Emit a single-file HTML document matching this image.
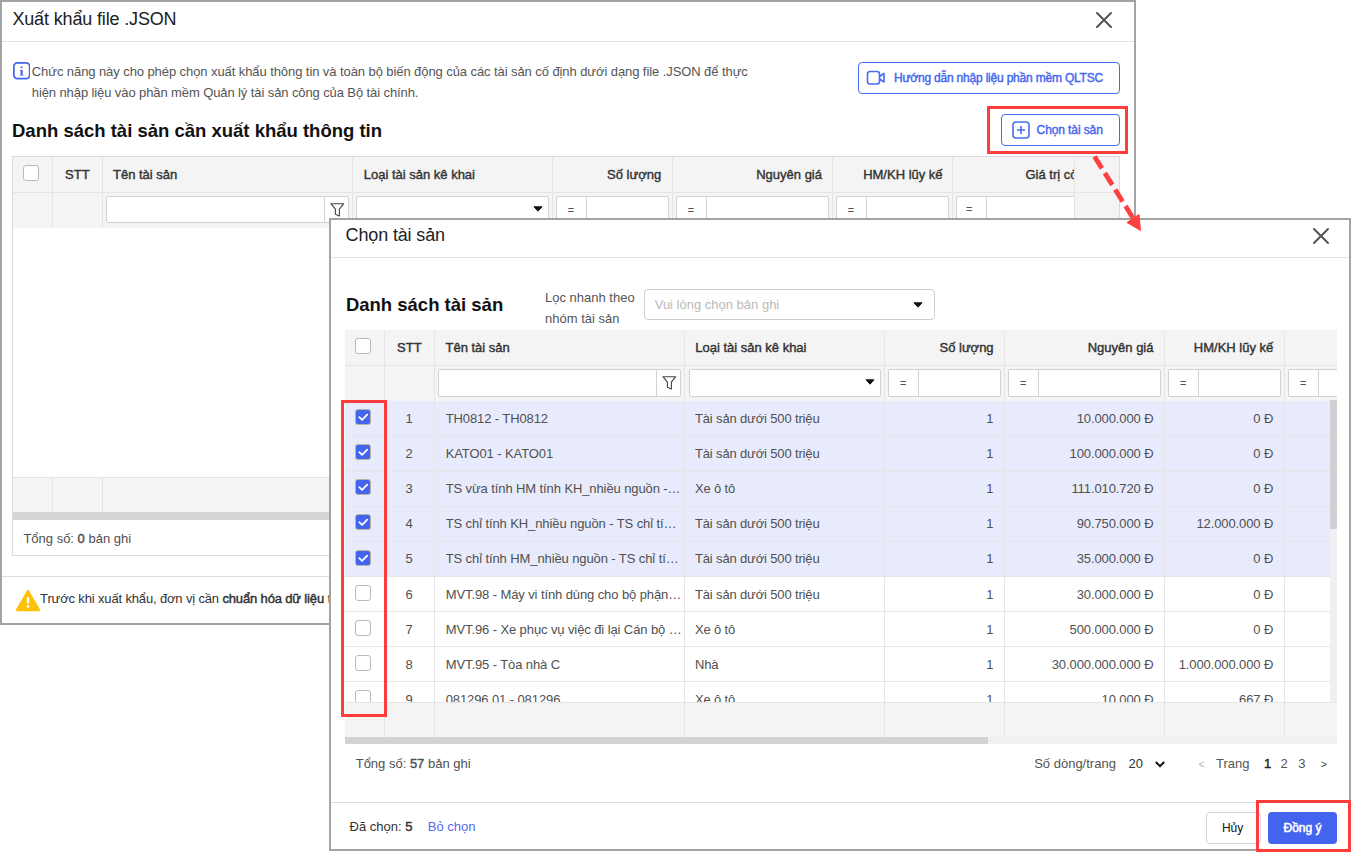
<!DOCTYPE html><html><head><meta charset="utf-8"><style>
html,body{margin:0;padding:0;background:#fff;width:1351px;height:852px;overflow:hidden;position:relative}
body{font-family:"Liberation Sans", sans-serif;}
.t{position:absolute;line-height:1;white-space:nowrap;}
b{font-weight:400;-webkit-text-stroke:0.45px currentColor}
</style></head><body>
<div style="position:absolute;left:0px;top:0px;width:1136px;height:625px;box-sizing:border-box;background:#fff"></div>
<div class="t" style="top:10.26px;font-size:18px;font-weight:400;color:#212121;letter-spacing:-0.15px;left:12.4px;">Xuất khẩu file .JSON</div>
<svg style="position:absolute;left:1095.0px;top:11.0px" width="18" height="18" viewBox="0 0 18 18"><path d="M2 2L16 16M16 2L2 16" stroke="#555" stroke-width="2" stroke-linecap="round"/></svg>
<div style="position:absolute;left:2px;top:41px;width:1132px;height:1px;box-sizing:border-box;background:#e3e3e3"></div>
<svg style="position:absolute;left:12.5px;top:62.3px" width="17.5" height="17.5" viewBox="0 0 17.5 17.5"><rect x="0.85" y="0.85" width="15.8" height="15.8" rx="3.6" fill="none" stroke="#4364ee" stroke-width="1.7"/><rect x="7.5" y="4.5" width="2.1" height="1.8" rx="0.8" fill="#4364ee"/><path d="M6.6 7.9H9.7V12.7H10.5V13.6H6.6V12.7H7.6V8.8H6.6Z" fill="#4364ee"/></svg>
<div class="t" style="top:64.90px;font-size:13px;font-weight:400;color:#555;letter-spacing:-0.08px;left:31.8px;">Chức năng này cho phép chọn xuất khẩu thông tin và toàn bộ biến động của các tài sản cố định dưới dạng file .JSON để thực</div>
<div class="t" style="top:85.60px;font-size:13px;font-weight:400;color:#555;letter-spacing:-0.1px;left:31.8px;">hiện nhập liệu vào phần mềm Quản lý tài sản công của Bộ tài chính.</div>
<div style="position:absolute;left:858px;top:62px;width:262px;height:32px;box-sizing:border-box;border:1px solid #4a6cf0;border-radius:4px;background:#fff"></div>
<svg style="position:absolute;left:866px;top:70px" width="20" height="16" viewBox="0 0 20 16"><rect x="1.5" y="1.5" width="12" height="12.5" rx="2.5" fill="none" stroke="#4a6cf0" stroke-width="1.6"/><path d="M13.5 6.5L18 3.5V12L13.5 9" fill="none" stroke="#4a6cf0" stroke-width="1.6" stroke-linejoin="round"/></svg>
<div class="t" style="top:71.74px;font-size:12px;font-weight:400;color:#4364ee;-webkit-text-stroke:0.4px #4364ee;letter-spacing:-0.2px;left:894px;">Hướng dẫn nhập liệu phần mềm QLTSC</div>
<div class="t" style="top:121.74px;font-size:18.5px;font-weight:700;color:#111;left:12px;">Danh sách tài sản cần xuất khẩu thông tin</div>
<div style="position:absolute;left:1001px;top:114px;width:119px;height:32px;box-sizing:border-box;border:1px solid #4a6cf0;border-radius:4px;background:#fff"></div>
<svg style="position:absolute;left:1012px;top:121px" width="18" height="18" viewBox="0 0 18 18"><rect x="1" y="1" width="16" height="16" rx="3" fill="none" stroke="#4a6cf0" stroke-width="1.6"/><path d="M9 5V13M5 9H13" stroke="#4a6cf0" stroke-width="1.6"/></svg>
<div class="t" style="top:123.64px;font-size:12px;font-weight:400;color:#4364ee;-webkit-text-stroke:0.4px #4364ee;letter-spacing:-0.1px;left:1036.6px;">Chọn tài sản</div>
<div style="position:absolute;left:12px;top:156px;width:1108px;height:400px;box-sizing:border-box;border:1px solid #d5dbe5;background:#fff"></div>
<div style="position:absolute;left:13px;top:157px;width:1106px;height:71px;box-sizing:border-box;background:#f4f4f4"></div>
<div style="position:absolute;left:13px;top:192px;width:1106px;height:1px;box-sizing:border-box;background:#e4e4e4"></div>
<div style="position:absolute;left:52px;top:157px;width:1px;height:71px;box-sizing:border-box;background:#e4e4e4"></div>
<div style="position:absolute;left:102px;top:157px;width:1px;height:71px;box-sizing:border-box;background:#e4e4e4"></div>
<div style="position:absolute;left:352px;top:157px;width:1px;height:71px;box-sizing:border-box;background:#e4e4e4"></div>
<div style="position:absolute;left:552px;top:157px;width:1px;height:71px;box-sizing:border-box;background:#e4e4e4"></div>
<div style="position:absolute;left:672px;top:157px;width:1px;height:71px;box-sizing:border-box;background:#e4e4e4"></div>
<div style="position:absolute;left:832px;top:157px;width:1px;height:71px;box-sizing:border-box;background:#e4e4e4"></div>
<div style="position:absolute;left:952px;top:157px;width:1px;height:71px;box-sizing:border-box;background:#e4e4e4"></div>
<div style="position:absolute;left:1074px;top:157px;width:1px;height:71px;box-sizing:border-box;background:#e4e4e4"></div>
<div style="position:absolute;left:23px;top:165px;width:16px;height:16px;box-sizing:border-box;border-radius:3px;background:#fff;border:1px solid #bababa"></div>
<div class="t" style="top:167.70px;font-size:13px;font-weight:400;color:#333;-webkit-text-stroke:0.4px #333;left:-222.7px;width:600px;text-align:center;">STT</div>
<div class="t" style="top:167.70px;font-size:13px;font-weight:400;color:#333;-webkit-text-stroke:0.4px #333;left:113px;">Tên tài sản</div>
<div class="t" style="top:167.70px;font-size:13px;font-weight:400;color:#333;-webkit-text-stroke:0.4px #333;left:363.7px;">Loại tài sản kê khai</div>
<div class="t" style="top:167.70px;font-size:13px;font-weight:400;color:#333;-webkit-text-stroke:0.4px #333;left:61.200000000000045px;width:600px;text-align:right;">Số lượng</div>
<div class="t" style="top:167.70px;font-size:13px;font-weight:400;color:#333;-webkit-text-stroke:0.4px #333;left:222px;width:600px;text-align:right;">Nguyên giá</div>
<div class="t" style="top:167.70px;font-size:13px;font-weight:400;color:#333;-webkit-text-stroke:0.4px #333;left:342.6px;width:600px;text-align:right;">HM/KH lũy kế</div>
<div style="position:absolute;left:953px;top:157px;width:121px;height:71px;overflow:hidden">
<div class="t" style="left:72.5px;top:11.3px;font-size:13px;color:#333;-webkit-text-stroke:0.4px #333">Giá trị còn lại</div>
</div>
<div style="position:absolute;left:106px;top:196px;width:243px;height:27px;box-sizing:border-box;border:1px solid #d2d2d2;background:#fff;border-radius:2px"></div>
<div style="position:absolute;left:324px;top:196px;width:1px;height:27px;box-sizing:border-box;background:#d2d2d2"></div>
<svg style="position:absolute;left:329px;top:201.5px" width="16" height="16" viewBox="0 0 16 16"><path d="M1.9 1.7H14.7L10.4 7.2V13.9L6.4 12.3V7.2Z" fill="none" stroke="#444" stroke-width="1.1" stroke-linejoin="round"/></svg>
<div style="position:absolute;left:356px;top:196px;width:193px;height:27px;box-sizing:border-box;border:1px solid #d2d2d2;background:#fff;border-radius:2px"></div>
<svg style="position:absolute;left:533px;top:206px" width="10" height="6" viewBox="0 0 10 6"><path d="M1 0.8H9L5 5.2Z" fill="#111" stroke="#111" stroke-width="1" stroke-linejoin="round"/></svg>
<div style="position:absolute;left:556px;top:196px;width:113px;height:27px;box-sizing:border-box;border:1px solid #d2d2d2;background:#fff;border-radius:2px"></div>
<div style="position:absolute;left:586px;top:196px;width:1px;height:27px;box-sizing:border-box;background:#d2d2d2"></div>
<div class="t" style="top:205.19px;font-size:11px;font-weight:400;color:#555;left:271px;width:600px;text-align:center;">=</div>
<div style="position:absolute;left:676px;top:196px;width:152.5px;height:27px;box-sizing:border-box;border:1px solid #d2d2d2;background:#fff;border-radius:2px"></div>
<div style="position:absolute;left:706px;top:196px;width:1px;height:27px;box-sizing:border-box;background:#d2d2d2"></div>
<div class="t" style="top:205.19px;font-size:11px;font-weight:400;color:#555;left:391px;width:600px;text-align:center;">=</div>
<div style="position:absolute;left:836px;top:196px;width:112.5px;height:27px;box-sizing:border-box;border:1px solid #d2d2d2;background:#fff;border-radius:2px"></div>
<div style="position:absolute;left:866px;top:196px;width:1px;height:27px;box-sizing:border-box;background:#d2d2d2"></div>
<div class="t" style="top:205.19px;font-size:11px;font-weight:400;color:#555;left:551px;width:600px;text-align:center;">=</div>
<div style="position:absolute;left:953px;top:190px;width:121px;height:38px;overflow:hidden">
<div style="position:absolute;left:3px;top:6px;width:150px;height:27px;box-sizing:border-box;border:1px solid #d2d2d2;background:#fff;border-radius:2px"></div><div style="position:absolute;left:33px;top:6px;width:1px;height:27px;background:#d2d2d2"></div><div class="t" style="left:13px;top:14px;font-size:11px;color:#555">=</div>
</div>
<div style="position:absolute;left:13px;top:477px;width:1106px;height:35px;box-sizing:border-box;background:#f4f4f4;border-top:1px solid #e4e4e4"></div>
<div style="position:absolute;left:52px;top:478px;width:1px;height:34px;box-sizing:border-box;background:#e4e4e4"></div>
<div style="position:absolute;left:102px;top:478px;width:1px;height:34px;box-sizing:border-box;background:#e4e4e4"></div>
<div style="position:absolute;left:13px;top:512px;width:1106px;height:8px;box-sizing:border-box;background:#d6d6d6"></div>
<div class="t" style="top:532.00px;font-size:13px;font-weight:400;color:#505050;left:23.4px;">Tổng số: <b>0</b> bản ghi</div>
<div style="position:absolute;left:2px;top:576px;width:1132px;height:1px;box-sizing:border-box;background:#d8dde6"></div>
<svg style="position:absolute;left:15px;top:589px" width="26" height="23" viewBox="0 0 26 23"><path d="M13 1.5L24.6 21.5H1.4Z" fill="#ffc107" stroke="#ffc107" stroke-width="1.6" stroke-linejoin="round"/><rect x="11.8" y="8" width="2.4" height="6.5" rx="0.6" fill="#fff"/><circle cx="13" cy="17.4" r="1.3" fill="#fff"/></svg>
<div class="t" style="top:592.40px;font-size:13px;font-weight:400;color:#333;letter-spacing:-0.15px;left:40.1px;">Trước khi xuất khẩu, đơn vị cần <b>chuẩn hóa dữ liệu</b> trước khi thực hiện xuất khẩu</div>
<div style="position:absolute;left:0px;top:0px;width:1136px;height:625px;box-sizing:border-box;border:2px solid #a3a3a3"></div>
<div style="position:absolute;left:329px;top:218px;width:1022px;height:633px;box-sizing:border-box;background:#fff"></div>
<div class="t" style="top:226.16px;font-size:18px;font-weight:400;color:#212121;letter-spacing:-0.15px;left:345.6px;">Chọn tài sản</div>
<svg style="position:absolute;left:1312.0px;top:227.0px" width="18" height="18" viewBox="0 0 18 18"><path d="M2 2L16 16M16 2L2 16" stroke="#555" stroke-width="2" stroke-linecap="round"/></svg>
<div style="position:absolute;left:331px;top:257px;width:1018px;height:1px;box-sizing:border-box;background:#e3e3e3"></div>
<div class="t" style="top:295.94px;font-size:18.5px;font-weight:700;color:#111;left:345.9px;">Danh sách tài sản</div>
<div class="t" style="top:291.20px;font-size:13px;font-weight:400;color:#555;left:545px;">Lọc nhanh theo</div>
<div class="t" style="top:311.50px;font-size:13px;font-weight:400;color:#555;left:545px;">nhóm tài sản</div>
<div style="position:absolute;left:644px;top:288.5px;width:291px;height:31px;box-sizing:border-box;border:1px solid #cfcfcf;border-radius:4px;background:#fff"></div>
<div class="t" style="top:297.80px;font-size:13px;font-weight:400;color:#b9b9b9;left:654.7px;">Vui lòng chọn bản ghi</div>
<svg style="position:absolute;left:912.5px;top:302px" width="10" height="6" viewBox="0 0 10 6"><path d="M1 0.8H9L5 5.2Z" fill="#111" stroke="#111" stroke-width="1" stroke-linejoin="round"/></svg>
<div style="position:absolute;left:345px;top:330px;width:1000px;height:71px;box-sizing:border-box;background:#f4f4f4"></div>
<div style="position:absolute;left:345px;top:365px;width:1000px;height:1px;box-sizing:border-box;background:#e4e4e4"></div>
<div style="position:absolute;left:355px;top:338px;width:16px;height:16px;box-sizing:border-box;border-radius:3px;background:#fff;border:1px solid #bababa"></div>
<div class="t" style="top:341.00px;font-size:13px;font-weight:400;color:#333;-webkit-text-stroke:0.4px #333;left:109.30000000000001px;width:600px;text-align:center;">STT</div>
<div class="t" style="top:341.00px;font-size:13px;font-weight:400;color:#333;-webkit-text-stroke:0.4px #333;left:445.5px;">Tên tài sản</div>
<div class="t" style="top:341.00px;font-size:13px;font-weight:400;color:#333;-webkit-text-stroke:0.4px #333;left:695.2px;">Loại tài sản kê khai</div>
<div class="t" style="top:341.00px;font-size:13px;font-weight:400;color:#333;-webkit-text-stroke:0.4px #333;left:393.6px;width:600px;text-align:right;">Số lượng</div>
<div class="t" style="top:341.00px;font-size:13px;font-weight:400;color:#333;-webkit-text-stroke:0.4px #333;left:553.5px;width:600px;text-align:right;">Nguyên giá</div>
<div class="t" style="top:341.00px;font-size:13px;font-weight:400;color:#333;-webkit-text-stroke:0.4px #333;left:673.3px;width:600px;text-align:right;">HM/KH lũy kế</div>
<div style="position:absolute;left:438px;top:369px;width:243px;height:28px;box-sizing:border-box;border:1px solid #d2d2d2;background:#fff;border-radius:2px"></div>
<div style="position:absolute;left:656px;top:369px;width:1px;height:28px;box-sizing:border-box;background:#d2d2d2"></div>
<svg style="position:absolute;left:661px;top:374.5px" width="16" height="16" viewBox="0 0 16 16"><path d="M1.9 1.7H14.7L10.4 7.2V13.9L6.4 12.3V7.2Z" fill="none" stroke="#444" stroke-width="1.1" stroke-linejoin="round"/></svg>
<div style="position:absolute;left:688.5px;top:369px;width:192px;height:28px;box-sizing:border-box;border:1px solid #d2d2d2;background:#fff;border-radius:2px"></div>
<svg style="position:absolute;left:864.5px;top:379px" width="10" height="6" viewBox="0 0 10 6"><path d="M1 0.8H9L5 5.2Z" fill="#111" stroke="#111" stroke-width="1" stroke-linejoin="round"/></svg>
<div style="position:absolute;left:888.3px;top:369px;width:113.20000000000005px;height:28px;box-sizing:border-box;border:1px solid #d2d2d2;background:#fff;border-radius:2px"></div>
<div style="position:absolute;left:918.3px;top:369px;width:1px;height:28px;box-sizing:border-box;background:#d2d2d2"></div>
<div class="t" style="top:378.19px;font-size:11px;font-weight:400;color:#555;left:603.3px;width:600px;text-align:center;">=</div>
<div style="position:absolute;left:1008.2px;top:369px;width:153.29999999999995px;height:28px;box-sizing:border-box;border:1px solid #d2d2d2;background:#fff;border-radius:2px"></div>
<div style="position:absolute;left:1038.2px;top:369px;width:1px;height:28px;box-sizing:border-box;background:#d2d2d2"></div>
<div class="t" style="top:378.19px;font-size:11px;font-weight:400;color:#555;left:723.2px;width:600px;text-align:center;">=</div>
<div style="position:absolute;left:1168.2px;top:369px;width:113.29999999999995px;height:28px;box-sizing:border-box;border:1px solid #d2d2d2;background:#fff;border-radius:2px"></div>
<div style="position:absolute;left:1198.2px;top:369px;width:1px;height:28px;box-sizing:border-box;background:#d2d2d2"></div>
<div class="t" style="top:378.19px;font-size:11px;font-weight:400;color:#555;left:883.2px;width:600px;text-align:center;">=</div>
<div style="position:absolute;left:1288.2px;top:369px;width:111.79999999999995px;height:28px;box-sizing:border-box;border:1px solid #d2d2d2;background:#fff;border-radius:2px"></div>
<div style="position:absolute;left:1318.2px;top:369px;width:1px;height:28px;box-sizing:border-box;background:#d2d2d2"></div>
<div class="t" style="top:378.19px;font-size:11px;font-weight:400;color:#555;left:1003.2px;width:600px;text-align:center;">=</div>
<div style="position:absolute;left:345px;top:401px;width:1000px;height:36px;box-sizing:border-box;background:#e8ebfc;border-bottom:1px solid #e6e6e6"></div>
<div style="position:absolute;left:355px;top:409px;width:16px;height:16px;box-sizing:border-box;border-radius:3px;background:#4364ee;border:1px solid #b9b3a6"></div>
<svg style="position:absolute;left:355px;top:409px" width="16" height="16" viewBox="0 0 16 16"><path d="M4.3 8.2L7.1 10.8L12.2 5.7" fill="none" stroke="#fff" stroke-width="1.8" stroke-linecap="round" stroke-linejoin="round"/></svg>
<div class="t" style="top:411.80px;font-size:13px;font-weight:400;color:#505050;left:109px;width:600px;text-align:center;">1</div>
<div class="t" style="top:411.80px;font-size:13px;font-weight:400;color:#505050;letter-spacing:-0.1px;left:445.7px;width:237px;overflow:hidden;text-overflow:ellipsis;padding-bottom:4px;">TH0812 - TH0812</div>
<div class="t" style="top:411.80px;font-size:13px;font-weight:400;color:#505050;letter-spacing:-0.15px;left:695px;">Tài sản dưới 500 triệu</div>
<div class="t" style="top:411.80px;font-size:13px;font-weight:400;color:#505050;left:393.6px;width:600px;text-align:right;">1</div>
<div class="t" style="top:411.80px;font-size:13px;font-weight:400;color:#505050;letter-spacing:-0.1px;left:553.5px;width:600px;text-align:right;">10.000.000 Đ</div>
<div class="t" style="top:411.80px;font-size:13px;font-weight:400;color:#505050;letter-spacing:-0.1px;left:673.3px;width:600px;text-align:right;">0 Đ</div>
<div style="position:absolute;left:345px;top:437px;width:1000px;height:35px;box-sizing:border-box;background:#e8ebfc;border-bottom:1px solid #e6e6e6"></div>
<div style="position:absolute;left:355px;top:444px;width:16px;height:16px;box-sizing:border-box;border-radius:3px;background:#4364ee;border:1px solid #b9b3a6"></div>
<svg style="position:absolute;left:355px;top:444px" width="16" height="16" viewBox="0 0 16 16"><path d="M4.3 8.2L7.1 10.8L12.2 5.7" fill="none" stroke="#fff" stroke-width="1.8" stroke-linecap="round" stroke-linejoin="round"/></svg>
<div class="t" style="top:446.95px;font-size:13px;font-weight:400;color:#505050;left:109px;width:600px;text-align:center;">2</div>
<div class="t" style="top:446.95px;font-size:13px;font-weight:400;color:#505050;letter-spacing:-0.1px;left:445.7px;width:237px;overflow:hidden;text-overflow:ellipsis;padding-bottom:4px;">KATO01 - KATO01</div>
<div class="t" style="top:446.95px;font-size:13px;font-weight:400;color:#505050;letter-spacing:-0.15px;left:695px;">Tài sản dưới 500 triệu</div>
<div class="t" style="top:446.95px;font-size:13px;font-weight:400;color:#505050;left:393.6px;width:600px;text-align:right;">1</div>
<div class="t" style="top:446.95px;font-size:13px;font-weight:400;color:#505050;letter-spacing:-0.1px;left:553.5px;width:600px;text-align:right;">100.000.000 Đ</div>
<div class="t" style="top:446.95px;font-size:13px;font-weight:400;color:#505050;letter-spacing:-0.1px;left:673.3px;width:600px;text-align:right;">0 Đ</div>
<div style="position:absolute;left:345px;top:472px;width:1000px;height:35px;box-sizing:border-box;background:#e8ebfc;border-bottom:1px solid #e6e6e6"></div>
<div style="position:absolute;left:355px;top:479px;width:16px;height:16px;box-sizing:border-box;border-radius:3px;background:#4364ee;border:1px solid #b9b3a6"></div>
<svg style="position:absolute;left:355px;top:479px" width="16" height="16" viewBox="0 0 16 16"><path d="M4.3 8.2L7.1 10.8L12.2 5.7" fill="none" stroke="#fff" stroke-width="1.8" stroke-linecap="round" stroke-linejoin="round"/></svg>
<div class="t" style="top:482.10px;font-size:13px;font-weight:400;color:#505050;left:109px;width:600px;text-align:center;">3</div>
<div class="t" style="top:482.10px;font-size:13px;font-weight:400;color:#505050;letter-spacing:-0.1px;left:445.7px;width:237px;overflow:hidden;text-overflow:ellipsis;padding-bottom:4px;">TS vừa tính HM tính KH_nhiều nguồn - TS vừa tính HM</div>
<div class="t" style="top:482.10px;font-size:13px;font-weight:400;color:#505050;letter-spacing:-0.15px;left:695px;">Xe ô tô</div>
<div class="t" style="top:482.10px;font-size:13px;font-weight:400;color:#505050;left:393.6px;width:600px;text-align:right;">1</div>
<div class="t" style="top:482.10px;font-size:13px;font-weight:400;color:#505050;letter-spacing:-0.1px;left:553.5px;width:600px;text-align:right;">111.010.720 Đ</div>
<div class="t" style="top:482.10px;font-size:13px;font-weight:400;color:#505050;letter-spacing:-0.1px;left:673.3px;width:600px;text-align:right;">0 Đ</div>
<div style="position:absolute;left:345px;top:507px;width:1000px;height:35px;box-sizing:border-box;background:#e8ebfc;border-bottom:1px solid #e6e6e6"></div>
<div style="position:absolute;left:355px;top:514px;width:16px;height:16px;box-sizing:border-box;border-radius:3px;background:#4364ee;border:1px solid #b9b3a6"></div>
<svg style="position:absolute;left:355px;top:514px" width="16" height="16" viewBox="0 0 16 16"><path d="M4.3 8.2L7.1 10.8L12.2 5.7" fill="none" stroke="#fff" stroke-width="1.8" stroke-linecap="round" stroke-linejoin="round"/></svg>
<div class="t" style="top:517.25px;font-size:13px;font-weight:400;color:#505050;left:109px;width:600px;text-align:center;">4</div>
<div class="t" style="top:517.25px;font-size:13px;font-weight:400;color:#505050;letter-spacing:-0.1px;left:445.7px;width:237px;overflow:hidden;text-overflow:ellipsis;padding-bottom:4px;">TS chỉ tính KH_nhiều nguồn - TS chỉ tính KH</div>
<div class="t" style="top:517.25px;font-size:13px;font-weight:400;color:#505050;letter-spacing:-0.15px;left:695px;">Tài sản dưới 500 triệu</div>
<div class="t" style="top:517.25px;font-size:13px;font-weight:400;color:#505050;left:393.6px;width:600px;text-align:right;">1</div>
<div class="t" style="top:517.25px;font-size:13px;font-weight:400;color:#505050;letter-spacing:-0.1px;left:553.5px;width:600px;text-align:right;">90.750.000 Đ</div>
<div class="t" style="top:517.25px;font-size:13px;font-weight:400;color:#505050;letter-spacing:-0.1px;left:673.3px;width:600px;text-align:right;">12.000.000 Đ</div>
<div style="position:absolute;left:345px;top:542px;width:1000px;height:35px;box-sizing:border-box;background:#e8ebfc;border-bottom:1px solid #e6e6e6"></div>
<div style="position:absolute;left:355px;top:550px;width:16px;height:16px;box-sizing:border-box;border-radius:3px;background:#4364ee;border:1px solid #b9b3a6"></div>
<svg style="position:absolute;left:355px;top:550px" width="16" height="16" viewBox="0 0 16 16"><path d="M4.3 8.2L7.1 10.8L12.2 5.7" fill="none" stroke="#fff" stroke-width="1.8" stroke-linecap="round" stroke-linejoin="round"/></svg>
<div class="t" style="top:552.40px;font-size:13px;font-weight:400;color:#505050;left:109px;width:600px;text-align:center;">5</div>
<div class="t" style="top:552.40px;font-size:13px;font-weight:400;color:#505050;letter-spacing:-0.1px;left:445.7px;width:237px;overflow:hidden;text-overflow:ellipsis;padding-bottom:4px;">TS chỉ tính HM_nhiều nguồn - TS chỉ tính HM</div>
<div class="t" style="top:552.40px;font-size:13px;font-weight:400;color:#505050;letter-spacing:-0.15px;left:695px;">Tài sản dưới 500 triệu</div>
<div class="t" style="top:552.40px;font-size:13px;font-weight:400;color:#505050;left:393.6px;width:600px;text-align:right;">1</div>
<div class="t" style="top:552.40px;font-size:13px;font-weight:400;color:#505050;letter-spacing:-0.1px;left:553.5px;width:600px;text-align:right;">35.000.000 Đ</div>
<div class="t" style="top:552.40px;font-size:13px;font-weight:400;color:#505050;letter-spacing:-0.1px;left:673.3px;width:600px;text-align:right;">0 Đ</div>
<div style="position:absolute;left:345px;top:577px;width:1000px;height:35px;box-sizing:border-box;background:#fff;border-bottom:1px solid #e6e6e6"></div>
<div style="position:absolute;left:355px;top:585px;width:16px;height:16px;box-sizing:border-box;border-radius:3px;background:#fff;border:1px solid #bababa"></div>
<div class="t" style="top:587.55px;font-size:13px;font-weight:400;color:#505050;left:109px;width:600px;text-align:center;">6</div>
<div class="t" style="top:587.55px;font-size:13px;font-weight:400;color:#505050;letter-spacing:-0.1px;left:445.7px;width:237px;overflow:hidden;text-overflow:ellipsis;padding-bottom:4px;">MVT.98 - Máy vi tính dùng cho bộ phận văn phòng</div>
<div class="t" style="top:587.55px;font-size:13px;font-weight:400;color:#505050;letter-spacing:-0.15px;left:695px;">Tài sản dưới 500 triệu</div>
<div class="t" style="top:587.55px;font-size:13px;font-weight:400;color:#505050;left:393.6px;width:600px;text-align:right;">1</div>
<div class="t" style="top:587.55px;font-size:13px;font-weight:400;color:#505050;letter-spacing:-0.1px;left:553.5px;width:600px;text-align:right;">30.000.000 Đ</div>
<div class="t" style="top:587.55px;font-size:13px;font-weight:400;color:#505050;letter-spacing:-0.1px;left:673.3px;width:600px;text-align:right;">0 Đ</div>
<div style="position:absolute;left:345px;top:612px;width:1000px;height:35px;box-sizing:border-box;background:#fff;border-bottom:1px solid #e6e6e6"></div>
<div style="position:absolute;left:355px;top:620px;width:16px;height:16px;box-sizing:border-box;border-radius:3px;background:#fff;border:1px solid #bababa"></div>
<div class="t" style="top:622.70px;font-size:13px;font-weight:400;color:#505050;left:109px;width:600px;text-align:center;">7</div>
<div class="t" style="top:622.70px;font-size:13px;font-weight:400;color:#505050;letter-spacing:-0.1px;left:445.7px;width:237px;overflow:hidden;text-overflow:ellipsis;padding-bottom:4px;">MVT.96 - Xe phục vụ việc đi lại Cán bộ Sở</div>
<div class="t" style="top:622.70px;font-size:13px;font-weight:400;color:#505050;letter-spacing:-0.15px;left:695px;">Xe ô tô</div>
<div class="t" style="top:622.70px;font-size:13px;font-weight:400;color:#505050;left:393.6px;width:600px;text-align:right;">1</div>
<div class="t" style="top:622.70px;font-size:13px;font-weight:400;color:#505050;letter-spacing:-0.1px;left:553.5px;width:600px;text-align:right;">500.000.000 Đ</div>
<div class="t" style="top:622.70px;font-size:13px;font-weight:400;color:#505050;letter-spacing:-0.1px;left:673.3px;width:600px;text-align:right;">0 Đ</div>
<div style="position:absolute;left:345px;top:647px;width:1000px;height:35px;box-sizing:border-box;background:#fff;border-bottom:1px solid #e6e6e6"></div>
<div style="position:absolute;left:355px;top:655px;width:16px;height:16px;box-sizing:border-box;border-radius:3px;background:#fff;border:1px solid #bababa"></div>
<div class="t" style="top:657.85px;font-size:13px;font-weight:400;color:#505050;left:109px;width:600px;text-align:center;">8</div>
<div class="t" style="top:657.85px;font-size:13px;font-weight:400;color:#505050;letter-spacing:-0.1px;left:445.7px;width:237px;overflow:hidden;text-overflow:ellipsis;padding-bottom:4px;">MVT.95 - Tòa nhà C</div>
<div class="t" style="top:657.85px;font-size:13px;font-weight:400;color:#505050;letter-spacing:-0.15px;left:695px;">Nhà</div>
<div class="t" style="top:657.85px;font-size:13px;font-weight:400;color:#505050;left:393.6px;width:600px;text-align:right;">1</div>
<div class="t" style="top:657.85px;font-size:13px;font-weight:400;color:#505050;letter-spacing:-0.1px;left:553.5px;width:600px;text-align:right;">30.000.000.000 Đ</div>
<div class="t" style="top:657.85px;font-size:13px;font-weight:400;color:#505050;letter-spacing:-0.1px;left:673.3px;width:600px;text-align:right;">1.000.000.000 Đ</div>
<div style="position:absolute;left:345px;top:682px;width:1000px;height:35px;box-sizing:border-box;background:#fff;border-bottom:1px solid #e6e6e6"></div>
<div style="position:absolute;left:355px;top:690px;width:16px;height:16px;box-sizing:border-box;border-radius:3px;background:#fff;border:1px solid #bababa"></div>
<div class="t" style="top:693.00px;font-size:13px;font-weight:400;color:#505050;left:109px;width:600px;text-align:center;">9</div>
<div class="t" style="top:693.00px;font-size:13px;font-weight:400;color:#505050;letter-spacing:-0.1px;left:445.7px;width:237px;overflow:hidden;text-overflow:ellipsis;padding-bottom:4px;">081296.01 - 081296</div>
<div class="t" style="top:693.00px;font-size:13px;font-weight:400;color:#505050;letter-spacing:-0.15px;left:695px;">Xe ô tô</div>
<div class="t" style="top:693.00px;font-size:13px;font-weight:400;color:#505050;left:393.6px;width:600px;text-align:right;">1</div>
<div class="t" style="top:693.00px;font-size:13px;font-weight:400;color:#505050;letter-spacing:-0.1px;left:553.5px;width:600px;text-align:right;">10.000 Đ</div>
<div class="t" style="top:693.00px;font-size:13px;font-weight:400;color:#505050;letter-spacing:-0.1px;left:673.3px;width:600px;text-align:right;">667 Đ</div>
<div style="position:absolute;left:384px;top:330px;width:1px;height:407px;box-sizing:border-box;background:#e6e6e6"></div>
<div style="position:absolute;left:434px;top:330px;width:1px;height:407px;box-sizing:border-box;background:#e6e6e6"></div>
<div style="position:absolute;left:684px;top:330px;width:1px;height:407px;box-sizing:border-box;background:#e6e6e6"></div>
<div style="position:absolute;left:884px;top:330px;width:1px;height:407px;box-sizing:border-box;background:#e6e6e6"></div>
<div style="position:absolute;left:1004px;top:330px;width:1px;height:407px;box-sizing:border-box;background:#e6e6e6"></div>
<div style="position:absolute;left:1164px;top:330px;width:1px;height:407px;box-sizing:border-box;background:#e6e6e6"></div>
<div style="position:absolute;left:1284px;top:330px;width:1px;height:407px;box-sizing:border-box;background:#e6e6e6"></div>
<div style="position:absolute;left:345px;top:702px;width:1000px;height:35px;box-sizing:border-box;background:#f4f4f4;border-top:1px solid #e6e6e6"></div>
<div style="position:absolute;left:384px;top:703px;width:1px;height:34px;box-sizing:border-box;background:#e6e6e6"></div>
<div style="position:absolute;left:434px;top:703px;width:1px;height:34px;box-sizing:border-box;background:#e6e6e6"></div>
<div style="position:absolute;left:684px;top:703px;width:1px;height:34px;box-sizing:border-box;background:#e6e6e6"></div>
<div style="position:absolute;left:884px;top:703px;width:1px;height:34px;box-sizing:border-box;background:#e6e6e6"></div>
<div style="position:absolute;left:1004px;top:703px;width:1px;height:34px;box-sizing:border-box;background:#e6e6e6"></div>
<div style="position:absolute;left:1164px;top:703px;width:1px;height:34px;box-sizing:border-box;background:#e6e6e6"></div>
<div style="position:absolute;left:1284px;top:703px;width:1px;height:34px;box-sizing:border-box;background:#e6e6e6"></div>
<div style="position:absolute;left:345px;top:737px;width:992px;height:7px;box-sizing:border-box;background:#f0f0f0"></div>
<div style="position:absolute;left:345px;top:737px;width:643px;height:7px;box-sizing:border-box;background:#d3d3d3"></div>
<div style="position:absolute;left:1330px;top:400px;width:7px;height:302px;box-sizing:border-box;background:#f0f0f0"></div>
<div style="position:absolute;left:1330px;top:400px;width:7px;height:129px;box-sizing:border-box;background:#d0d0d0"></div>
<div style="position:absolute;left:1337px;top:330px;width:12px;height:420px;box-sizing:border-box;background:#fff"></div>
<div class="t" style="top:756.60px;font-size:13px;font-weight:400;color:#505050;left:355.7px;">Tổng số: <b>57</b> bản ghi</div>
<div class="t" style="top:757.20px;font-size:13px;font-weight:400;color:#555;left:1034.2px;">Số dòng/trang</div>
<div class="t" style="top:757.20px;font-size:13px;font-weight:400;color:#333;left:1128.6px;">20</div>
<svg style="position:absolute;left:1154px;top:759.5px" width="12" height="9" viewBox="0 0 12 9"><path d="M1.8 2L6 6.2L10.2 2" fill="none" stroke="#111" stroke-width="2"/></svg>
<div class="t" style="top:758.71px;font-size:10.5px;font-weight:400;color:#b0b0b0;left:1198.6px;">&lt;</div>
<div class="t" style="top:757.20px;font-size:13px;font-weight:400;color:#555;left:1216px;">Trang</div>
<div class="t" style="top:757.20px;font-size:13px;font-weight:400;color:#222;-webkit-text-stroke:0.4px #222;left:1263.9px;">1</div>
<div class="t" style="top:757.20px;font-size:13px;font-weight:400;color:#555;left:1280.5px;">2</div>
<div class="t" style="top:757.20px;font-size:13px;font-weight:400;color:#555;left:1298.2px;">3</div>
<div class="t" style="top:758.71px;font-size:10.5px;font-weight:400;color:#444;left:1320.8px;">&gt;</div>
<div style="position:absolute;left:331px;top:802px;width:1018px;height:1px;box-sizing:border-box;background:#d8dde6"></div>
<div class="t" style="top:819.70px;font-size:13px;font-weight:400;color:#333;left:349.5px;">Đã chọn: <b>5</b></div>
<div class="t" style="top:819.70px;font-size:13px;font-weight:400;color:#5468f2;left:427.8px;">Bỏ chọn</div>
<div style="position:absolute;left:1205.5px;top:812px;width:55px;height:32px;box-sizing:border-box;border:1px solid #cfd4de;border-radius:4px;background:#fff"></div>
<div class="t" style="top:821.64px;font-size:12px;font-weight:400;color:#111;left:932.5999999999999px;width:600px;text-align:center;">Hủy</div>
<div style="position:absolute;left:1268px;top:812px;width:69px;height:32px;box-sizing:border-box;background:#4364ee;border-radius:4px"></div>
<div class="t" style="top:821.64px;font-size:12px;font-weight:400;color:#fff;-webkit-text-stroke:0.55px #fff;left:1002.5px;width:600px;text-align:center;">Đồng ý</div>
<div style="position:absolute;left:329px;top:218px;width:1022px;height:633px;box-sizing:border-box;border:2px solid #a3a3a3"></div>
<div style="position:absolute;left:987px;top:106px;width:141px;height:48px;box-sizing:border-box;border:3px solid #ff3b3b"></div>
<div style="position:absolute;left:341px;top:400px;width:46px;height:317px;box-sizing:border-box;border:3px solid #ff3b3b"></div>
<div style="position:absolute;left:1256px;top:800px;width:95px;height:52px;box-sizing:border-box;border:3px solid #ff3b3b"></div>
<svg style="position:absolute;left:0;top:0" width="1351" height="852"><path d="M1094.5 156.5L1133 218" stroke="#ff4040" stroke-width="4.8" stroke-dasharray="14 5.5" stroke-linecap="butt" fill="none"/><path d="M1140.5 230.5L1127 222.5L1139 214.5Z" fill="#ff4040" stroke="#ff4040" stroke-width="1" stroke-linejoin="round"/></svg>
</body></html>
